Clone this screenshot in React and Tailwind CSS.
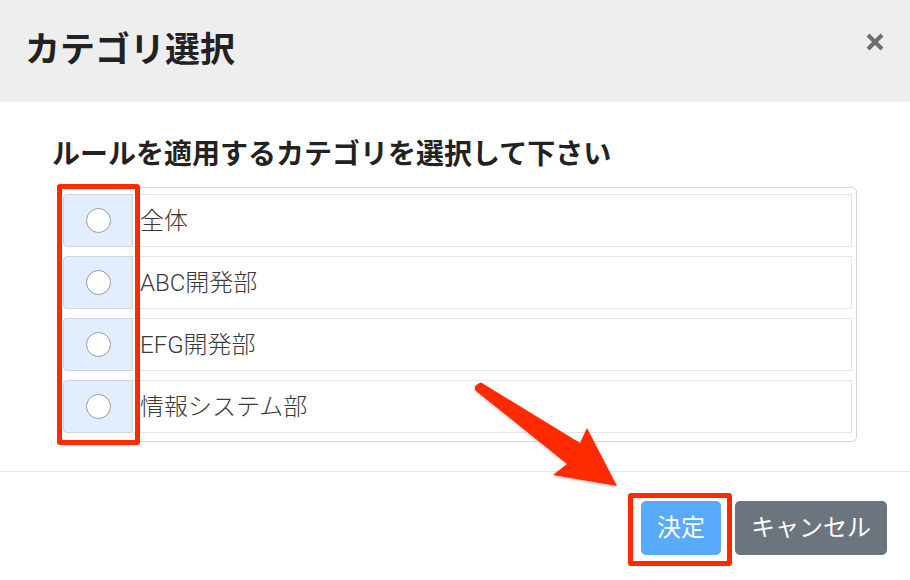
import React from "react";

const items = ["全体", "ABC開発部", "EFG開発部", "情報システム部"];

export default function App() {
  const font = { fontFamily: '"Roboto","Noto Sans CJK JP",sans-serif' };
  return (
    <div className="relative w-[910px] h-[580px] overflow-hidden bg-white" style={font}>
      {/* header */}
      <div className="h-[102px] bg-[#eeeeee] flex items-start justify-between pl-[25px] pr-[25px] pt-[26px]">
        <div className="text-[35px] leading-[42px] font-bold text-[#222]" style={{ fontFamily: '"Noto Sans CJK JP",sans-serif' }}>
          カテゴリ選択
        </div>
        <svg width="20" height="20" viewBox="0 0 20 20" className="mt-[6px]">
          <path d="M3 3 L17 17 M17 3 L3 17" stroke="#6f6f6f" strokeWidth="4.2" strokeLinecap="butt" />
        </svg>
      </div>

      {/* body */}
      <div className="pt-[30px] pb-[29px] border-b border-[#e6e6e6]">
        <div className="pl-[52px] text-[28px] leading-[40px] font-bold text-[#222]" style={{ fontFamily: '"Noto Sans CJK JP",sans-serif' }}>
          ルールを適用するカテゴリを選択して下さい
        </div>
        <div className="ml-[57px] w-[800px] mt-[15px] border border-[#d4d4d4] rounded-[5px] pl-[5px] pr-[4px] pt-[6px] pb-[8px] flex flex-col gap-[9px]">
          {items.map((t) => (
            <div key={t} className="flex h-[53px]">
              <div className="w-[70px] h-full bg-[#e2eefd] border border-[#cdd5df] rounded-l-[4px] flex items-center justify-center">
                <div className="w-[25px] h-[25px] rounded-full bg-white border border-[#9a9a9a]" />
              </div>
              <div className="flex-1 h-full border border-[#e6e6e6] border-l-0 flex items-center pl-[7px] text-[24px] text-[#3a3a3a] font-light">
                {t}
              </div>
            </div>
          ))}
        </div>
      </div>

      {/* footer */}
      <div className="flex justify-end gap-[14px] pt-[29px] pr-[23px]">
        <button className="h-[54px] px-[16px] rounded-[5px] bg-[#59aafb] text-white text-[24px] leading-none">
          決定
        </button>
        <button className="h-[54px] px-[16px] rounded-[5px] bg-[#6c757d] text-white text-[24px] leading-none">
          キャンセル
        </button>
      </div>

      {/* annotations */}
      <div className="absolute left-[57px] top-[184px] w-[83px] h-[261px] border-[5px] border-[#ff2a00] rounded-[3px]" />
      <div className="absolute left-[628px] top-[493px] w-[104px] h-[73px] border-[5px] border-[#ff2a00] rounded-[3px]" />
      <svg className="absolute left-0 top-0" width="910" height="580" viewBox="0 0 910 580">
        <defs>
          <filter id="sh" x="-20%" y="-20%" width="140%" height="140%">
            <feDropShadow dx="0" dy="1" stdDeviation="1.5" floodColor="#000" floodOpacity="0.25" />
          </filter>
        </defs>
        <path
          d="M481 382.5 L580 443 L587 428 L617 486 L553 475 L567 464 L476 391 Q472 386 481 382.5 Z"
          fill="#ff2a00"
          filter="url(#sh)"
        />
      </svg>
    </div>
  );
}
